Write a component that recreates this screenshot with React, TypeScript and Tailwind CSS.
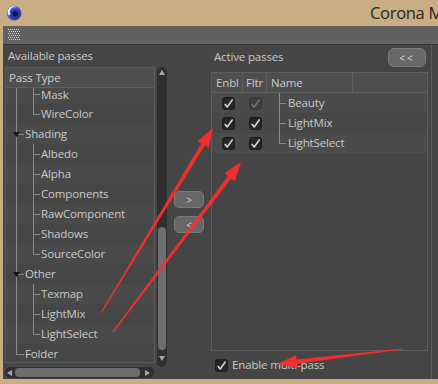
import React from "react";

type TreeRow = {
  label: string;
  level: 0 | 1;
  expanded?: boolean;
  last?: boolean;
};

const treeRows: TreeRow[] = [
  { label: "Mask", level: 1 },
  { label: "WireColor", level: 1, last: true },
  { label: "Shading", level: 0, expanded: true },
  { label: "Albedo", level: 1 },
  { label: "Alpha", level: 1 },
  { label: "Components", level: 1 },
  { label: "RawComponent", level: 1 },
  { label: "Shadows", level: 1 },
  { label: "SourceColor", level: 1, last: true },
  { label: "Other", level: 0, expanded: true },
  { label: "Texmap", level: 1 },
  { label: "LightMix", level: 1 },
  { label: "LightSelect", level: 1, last: true },
  { label: "Folder", level: 0, last: true },
];

const activeRows = [
  { name: "Beauty", fltrDisabled: true },
  { name: "LightMix" },
  { name: "LightSelect", last: true },
];

const font = "font-['Open_Sans','Noto_Sans',sans-serif]";

function Check({ disabled }: { disabled?: boolean }) {
  return (
    <div
      className={`w-[13px] h-[13px] rounded-[3px] border flex items-center justify-center ${
        disabled ? "bg-[#3e3e3e] border-[#353535]" : "bg-[#262626] border-[#1c1c1c]"
      }`}
    >
      <svg width="11" height="11" viewBox="0 0 11 11">
        <path
          d="M2.2 6.4 L4.2 9 L9.2 2"
          fill="none"
          stroke={disabled ? "#737373" : "#d6d6d6"}
          strokeWidth="1.6"
          strokeLinecap="round"
          strokeLinejoin="round"
        />
      </svg>
    </div>
  );
}

function Tri({ dir }: { dir: "up" | "down" | "left" | "right" }) {
  const d = {
    up: "M1 6 L4 1 L7 6 Z",
    down: "M1 2 L4 7 L7 2 Z",
    left: "M6 1 L1 4 L6 7 Z",
    right: "M2 1 L7 4 L2 7 Z",
  }[dir];
  return (
    <svg width="8" height="8" viewBox="0 0 8 8">
      <path d={d} fill="#a9a9a9" />
    </svg>
  );
}

function arrowPoints(x1: number, y1: number, x2: number, y2: number, tailW: number, neckW: number, headW: number, headL: number) {
  const len = Math.hypot(x2 - x1, y2 - y1);
  const dx = (x2 - x1) / len;
  const dy = (y2 - y1) / len;
  const nx = -dy;
  const ny = dx;
  const cx = x2 - dx * headL;
  const cy = y2 - dy * headL;
  const p = (x: number, y: number) => `${x.toFixed(1)},${y.toFixed(1)}`;
  return [
    p(x1 + (nx * tailW) / 2, y1 + (ny * tailW) / 2),
    p(cx + (nx * neckW) / 2, cy + (ny * neckW) / 2),
    p(cx + (nx * headW) / 2, cy + (ny * headW) / 2),
    p(x2, y2),
    p(cx - (nx * headW) / 2, cy - (ny * headW) / 2),
    p(cx - (nx * neckW) / 2, cy - (ny * neckW) / 2),
    p(x1 - (nx * tailW) / 2, y1 - (ny * tailW) / 2),
  ].join(" ");
}

function C4DLogo() {
  return (
    <svg width="16" height="16" viewBox="0 0 16 16" className="shrink-0">
      <defs>
        <radialGradient id="c4d" cx="0.6" cy="0.6" r="0.6">
          <stop offset="0" stopColor="#1a2260" />
          <stop offset="0.6" stopColor="#2c45b8" />
          <stop offset="1" stopColor="#6a8aee" />
        </radialGradient>
      </defs>
      <circle cx="8" cy="8" r="7.5" fill="url(#c4d)" />
      <path d="M3 10.5 A5.5 5.5 0 0 1 10.5 2.6 A4.5 4.5 0 0 0 4.6 9 Z" fill="#f2f4ff" />
      <circle cx="9.3" cy="8.8" r="2.6" fill="#101640" />
    </svg>
  );
}

function Grip() {
  const dots = [];
  for (let r = 0; r < 6; r++) {
    for (let c = 0; c < 6; c++) {
      dots.push(<rect key={`${r}-${c}`} x={c * 2 + (r % 2)} y={r * 2} width="1" height="1" fill="#d6d6d6" />);
    }
  }
  return (
    <svg width="13" height="12" viewBox="0 0 13 12" className="shrink-0">
      {dots}
    </svg>
  );
}

function TreeLine({ row, mid }: { row: TreeRow; mid: number }) {
  const line = "absolute bg-[#8a8a8a] w-px";
  const hline = "absolute bg-[#8a8a8a] h-px";
  return (
    <>
      {/* root guide */}
      <span
        className={`${line} left-[10px] top-0`}
        style={{ height: row.level === 0 && row.last ? mid : "100%" }}
      />
      {row.level === 1 && (
        <>
          <span className={`${line} left-[27px] top-0`} style={{ height: row.last ? mid : "100%" }} />
          <span className={`${hline} left-[27px] w-[7px]`} style={{ top: mid }} />
        </>
      )}
      {row.level === 0 && <span className={`${hline} left-[10px] w-[8px]`} style={{ top: mid }} />}
      {row.expanded && (
        <svg width="7" height="5" viewBox="0 0 7 5" className="absolute left-[7px]" style={{ top: mid - 2 }}>
          <path d="M0 0 L7 0 L3.5 5 Z" fill="#151515" />
        </svg>
      )}
    </>
  );
}

export default function App() {
  const arrows = [
    arrowPoints(101, 313, 213, 128, 1.2, 4.2, 13, 19),
    arrowPoints(113, 332, 241, 162, 1.2, 4.2, 13, 19),
    arrowPoints(402, 349, 277, 364, 1.2, 4.2, 13, 20),
  ];

  return (
    <div className={`relative w-[438px] h-[384px] bg-[#c9ad83] flex flex-col overflow-hidden ${font}`}>
      {/* title bar */}
      <div className="h-[26px] flex items-center pl-[6px] shrink-0 overflow-hidden">
        <C4DLogo />
        <span className="ml-[348px] shrink-0 text-[16.5px] text-[#262626] whitespace-nowrap leading-none tracking-[-0.3px]">
          Corona M
        </span>
      </div>

      <div className="flex-1 ml-[3px] mb-[5px] flex flex-col bg-[#454545] min-h-0">
        {/* toolbar */}
        <div className="h-[19px] bg-[#616161] border-b border-[#363636] flex items-center pl-[5px] shrink-0">
          <Grip />
        </div>

        <div className="flex-1 flex min-h-0 text-[11.5px] tracking-[-0.15px] text-[#c9c9c9]">
          {/* left column */}
          <div className="w-[165px] pl-[2px] flex flex-col">
            <div className="h-[22px] flex items-center pl-[3px] leading-none">Available passes</div>
            <div className="flex gap-[2px] h-[300px]">
              <div className="w-[150px] h-[296px] border border-[#5c5c5c] flex flex-col bg-[#474747] overflow-hidden">
                <div className="h-[20px] shrink-0 bg-[#4f4f4f] border-b border-[#5f5f5f] flex items-center pl-[3px] leading-none text-[#cdcdcd]">
                  Pass Type
                </div>
                {treeRows.map((row, i) => {
                  const first = i === 0;
                  return (
                    <div
                      key={row.label}
                      className={`relative shrink-0 flex leading-none ${first ? "h-[16px] items-start pt-[1px]" : "h-[20px] items-center"} ${
                        i % 2 === 0 ? "bg-[#4a4a4a]" : "bg-[#464646]"
                      } ${row.level === 1 ? "pl-[35px]" : "pl-[19px]"}`}
                    >
                      <TreeLine row={row} mid={first ? 6 : 10} />
                      <span>{row.label}</span>
                    </div>
                  );
                })}
              </div>
              {/* vertical scrollbar */}
              <div className="w-[10px] h-[300px] rounded-[5px] bg-[#2f2f2f] flex flex-col items-center py-[2px]">
                <div className="h-[8px] flex items-center justify-center">
                  <Tri dir="up" />
                </div>
                <div className="flex-1" />
                <div className="w-[8px] h-[123px] rounded-[4px] bg-[#6f6f6f]" />
                <div className="h-[15px] flex items-center justify-center">
                  <Tri dir="down" />
                </div>
              </div>
            </div>
            {/* horizontal scrollbar */}
            <div className="w-[149px] h-[11px] rounded-[5px] bg-[#2f2f2f] flex items-center">
              <div className="w-[10px] flex justify-center">
                <Tri dir="left" />
              </div>
              <div className="w-[125px] h-[9px] rounded-[4px] bg-[#6d6d6d]" />
              <div className="flex-1 flex justify-center">
                <Tri dir="right" />
              </div>
            </div>
          </div>

          {/* middle buttons */}
          <div className="w-[44px] flex flex-col items-center pt-[146px] gap-[8px] -ml-[1px]">
            <div className="w-[30px] h-[17px] rounded-[5px] bg-[#676767] border border-[#7a7a7a] flex items-center justify-center text-[10px] leading-none text-[#d4d4d4]">
              &gt;
            </div>
            <div className="w-[30px] h-[17px] rounded-[5px] bg-[#676767] border border-[#7a7a7a] flex items-center justify-center text-[10px] leading-none text-[#d4d4d4]">
              &lt;
            </div>
          </div>

          {/* right column */}
          <div className="w-[217px] flex flex-col">
            <div className="h-[27px] flex items-start justify-between">
              <span className="pl-[3px] pt-[6px] leading-none">Active passes</span>
              <div className="mt-[3px] mr-[2px] w-[38px] h-[19px] rounded-[6px] bg-[#686868] border border-[#7c7c7c] flex items-center justify-center text-[10px] leading-none tracking-[2px] text-[#dadada]">
                &lt;&lt;
              </div>
            </div>
            <div className="h-[279px] border border-[#5e5e5e] bg-[#454545] flex flex-col">
              <div className="h-[20px] flex bg-[#4e4e4e] border-b border-[#5e5e5e] leading-none">
                <div className="w-[31px] border-r border-[#5e5e5e] flex items-center pl-[4px]">Enbl</div>
                <div className="w-[24px] border-r border-[#5e5e5e] flex items-center pl-[3px]">Fltr</div>
                <div className="w-[86px] border-r border-[#5e5e5e] flex items-center pl-[4px]">Name</div>
                <div className="flex-1" />
              </div>
              {activeRows.map((r, i) => (
                <div
                  key={r.name}
                  className={`h-[20px] flex items-center leading-none ${i % 2 === 0 ? "bg-[#4b4b4b]" : "bg-[#474747]"}`}
                >
                  <div className="w-[31px] flex justify-center pl-[1px]">
                    <Check />
                  </div>
                  <div className="w-[25px] flex justify-center">
                    <Check disabled={r.fltrDisabled} />
                  </div>
                  <div className="relative h-full flex items-center pl-[20px]">
                    <span className={`absolute left-[11px] top-0 w-px bg-[#8a8a8a] ${r.last ? "h-[10px]" : "h-full"}`} />
                    <span className="absolute left-[11px] top-[10px] h-px w-[7px] bg-[#8a8a8a]" />
                    <span>{r.name}</span>
                  </div>
                </div>
              ))}
            </div>
            <div className="flex-1 flex items-center pl-[4px] gap-[4px] leading-none">
              <Check />
              <span>Enable multi-pass</span>
            </div>
          </div>

          {/* splitter */}
          <div className="ml-[3px] border-l border-[#5c5c5c] flex-1" />
        </div>
      </div>

      {/* red annotation arrows */}
      <svg className="absolute inset-0 pointer-events-none" width="438" height="384" viewBox="0 0 438 384">
        {arrows.map((pts, i) => (
          <polygon key={i} points={pts} fill="#ff2d2d" fillOpacity="0.92" />
        ))}
      </svg>
    </div>
  );
}
